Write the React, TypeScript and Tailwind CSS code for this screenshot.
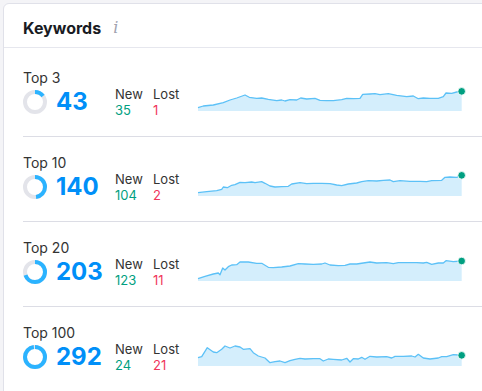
const rows = [
  {
    label: "Top 3",
    value: 43,
    pct: 0.147,
    added: 35,
    lost: 1,
    base: 155,
    pts: [
      [24, 145], [40, 140], [70, 137], [100, 130], [120, 122], [140, 116], [165, 107], [178, 114],
      [200, 117], [215, 116], [235, 120], [260, 124], [275, 122], [285, 125], [300, 121], [320, 122],
      [332, 116], [350, 119], [375, 117], [390, 123], [410, 124], [430, 124], [455, 121], [470, 117],
      [490, 118], [510, 117], [518, 105], [540, 104], [555, 103], [570, 106], [595, 103], [620, 108],
      [650, 112], [670, 110], [685, 118], [700, 116], [720, 117], [745, 117], [760, 112], [768, 101],
      [785, 102], [800, 98], [815, 96],
    ],
  },
  {
    label: "Top 10",
    value: 140,
    pct: 0.48,
    added: 104,
    lost: 2,
    base: 170,
    pts: [
      [24, 160], [50, 157], [80, 154], [95, 150], [100, 143], [112, 145], [125, 138], [135, 136],
      [150, 129], [165, 130], [185, 128], [195, 130], [215, 127], [225, 132], [240, 140], [255, 143],
      [275, 142], [295, 141], [305, 134], [330, 130], [350, 133], [370, 132], [395, 132], [420, 133],
      [440, 137], [455, 139], [475, 134], [500, 131], [515, 127], [535, 124], [560, 125], [580, 123],
      [600, 122], [610, 127], [630, 124], [660, 126], [690, 126], [710, 127], [725, 124], [755, 123],
      [765, 114], [780, 113], [800, 114], [815, 108],
    ],
  },
  {
    label: "Top 20",
    value: 203,
    pct: 0.695,
    added: 123,
    lost: 11,
    base: 185,
    pts: [
      [24, 178], [45, 171], [70, 164], [85, 161], [90, 166], [98, 146], [105, 152], [115, 142],
      [125, 137], [140, 136], [150, 128], [175, 128], [200, 132], [215, 132], [225, 138], [235, 144],
      [250, 145], [275, 143], [300, 140], [325, 133], [345, 134], [370, 135], [395, 134], [405, 131],
      [420, 137], [445, 139], [465, 138], [480, 134], [500, 134], [520, 131], [540, 128], [560, 131],
      [590, 130], [610, 133], [625, 130], [650, 130], [680, 130], [700, 131], [710, 129], [725, 135],
      [745, 131], [760, 131], [768, 124], [790, 127], [815, 125],
    ],
  },
  {
    label: "Top 100",
    value: 292,
    pct: 0.975,
    added: 24,
    lost: 21,
    base: 170,
    pts: [
      [24, 145], [35, 142], [52, 115], [70, 128], [80, 130], [95, 120], [105, 110], [120, 116],
      [135, 110], [150, 113], [160, 120], [180, 118], [190, 130], [205, 140], [225, 146], [240, 160],
      [255, 157], [270, 155], [285, 160], [300, 154], [315, 150], [330, 147], [345, 149], [370, 148],
      [390, 148], [400, 155], [415, 149], [430, 150], [455, 152], [470, 147], [480, 158], [490, 148],
      [505, 149], [515, 144], [525, 150], [540, 141], [560, 143], [590, 142], [605, 146], [615, 141],
      [640, 141], [665, 140], [675, 143], [685, 135], [700, 146], [720, 149], [745, 146], [755, 142],
      [770, 142], [790, 136], [805, 137], [815, 138],
    ],
  },
];

const Ring = ({ pct }: { pct: number }) => {
  const r = 10;
  const c = 2 * Math.PI * r;
  return (
    <svg width="24" height="24" viewBox="0 0 24 24" className="shrink-0">
      <circle cx="12" cy="12" r={r} fill="none" stroke="#e3e4ea" strokeWidth="4" />
      <circle
        cx="12"
        cy="12"
        r={r}
        fill="none"
        stroke="#2bb3ff"
        strokeWidth="4"
        strokeDasharray={`${c * pct} ${c}`}
        transform="rotate(-90 12 12)"
      />
    </svg>
  );
};

const Spark = ({ pts, base }: { pts: number[][]; base: number }) => {
  const H = 26;
  const bottom = 25;
  const xy = pts.map(([x, y]) => [(x - 24) / 3, bottom - (base - y) / 3]);
  const line = xy.map(([x, y], i) => `${i ? "L" : "M"}${x.toFixed(1)} ${y.toFixed(1)}`).join(" ");
  const last = xy[xy.length - 1];
  const area = `${line} L${last[0].toFixed(1)} ${bottom} L0 ${bottom} Z`;
  return (
    <svg width="270" height={H} viewBox={`0 0 270 ${H}`} className="shrink-0 overflow-visible">
      <path d={area} fill="#d4eefc" />
      <path d={line} fill="none" stroke="#5cc1f7" strokeWidth="1.3" strokeLinejoin="round" />
      <circle cx={last[0]} cy={last[1]} r="3.8" fill="#009f81" stroke="#ffffff" strokeWidth="0.8" />
    </svg>
  );
};

export default function App() {
  return (
    <div
      className="w-[482px] h-[391px] overflow-hidden bg-[#f4f4f7] pt-[3px] pl-[3px]"
      style={{ fontFamily: "Inter, 'Noto Sans', sans-serif" }}
    >
      <div className="w-[560px] min-h-[420px] bg-white border border-[#e0e1e9] rounded-md">
        <div className="flex items-center gap-3 pl-[19px] pt-3 pb-[7px] border-b border-[#e6e7ee]">
          <h2 className="text-base leading-6 font-bold text-[#191b23]">Keywords</h2>
          <span
            className="text-base leading-6 italic text-[#a0a3b0]"
            style={{ fontFamily: "'DejaVu Serif', serif" }}
          >
            i
          </span>
        </div>
        <div className="pl-[19px] pr-5 pt-1">
          {rows.map((row) => (
            <div key={row.label} className="pt-[18px] pb-[18px] border-b border-[#dcdde5]">
              <div className="text-sm leading-4 text-[#333]">{row.label}</div>
              <div className="flex items-center">
                <div className="flex items-center gap-[9px] w-[92px] shrink-0">
                  <Ring pct={row.pct} />
                  <span className="text-2xl leading-8 font-bold text-[#008ff8]">{row.value}</span>
                </div>
                <div className="w-[38px] shrink-0 text-[13px] leading-4">
                  <div className="text-[#333]">New</div>
                  <div className="text-[#009f81]">{row.added}</div>
                </div>
                <div className="w-[45px] shrink-0 text-[13px] leading-4">
                  <div className="text-[#333]">Lost</div>
                  <div className="text-[#f0365b]">{row.lost}</div>
                </div>
                <div className="self-end mb-[6px]">
                  <Spark pts={row.pts} base={row.base} />
                </div>
              </div>
            </div>
          ))}
        </div>
      </div>
    </div>
  );
}
